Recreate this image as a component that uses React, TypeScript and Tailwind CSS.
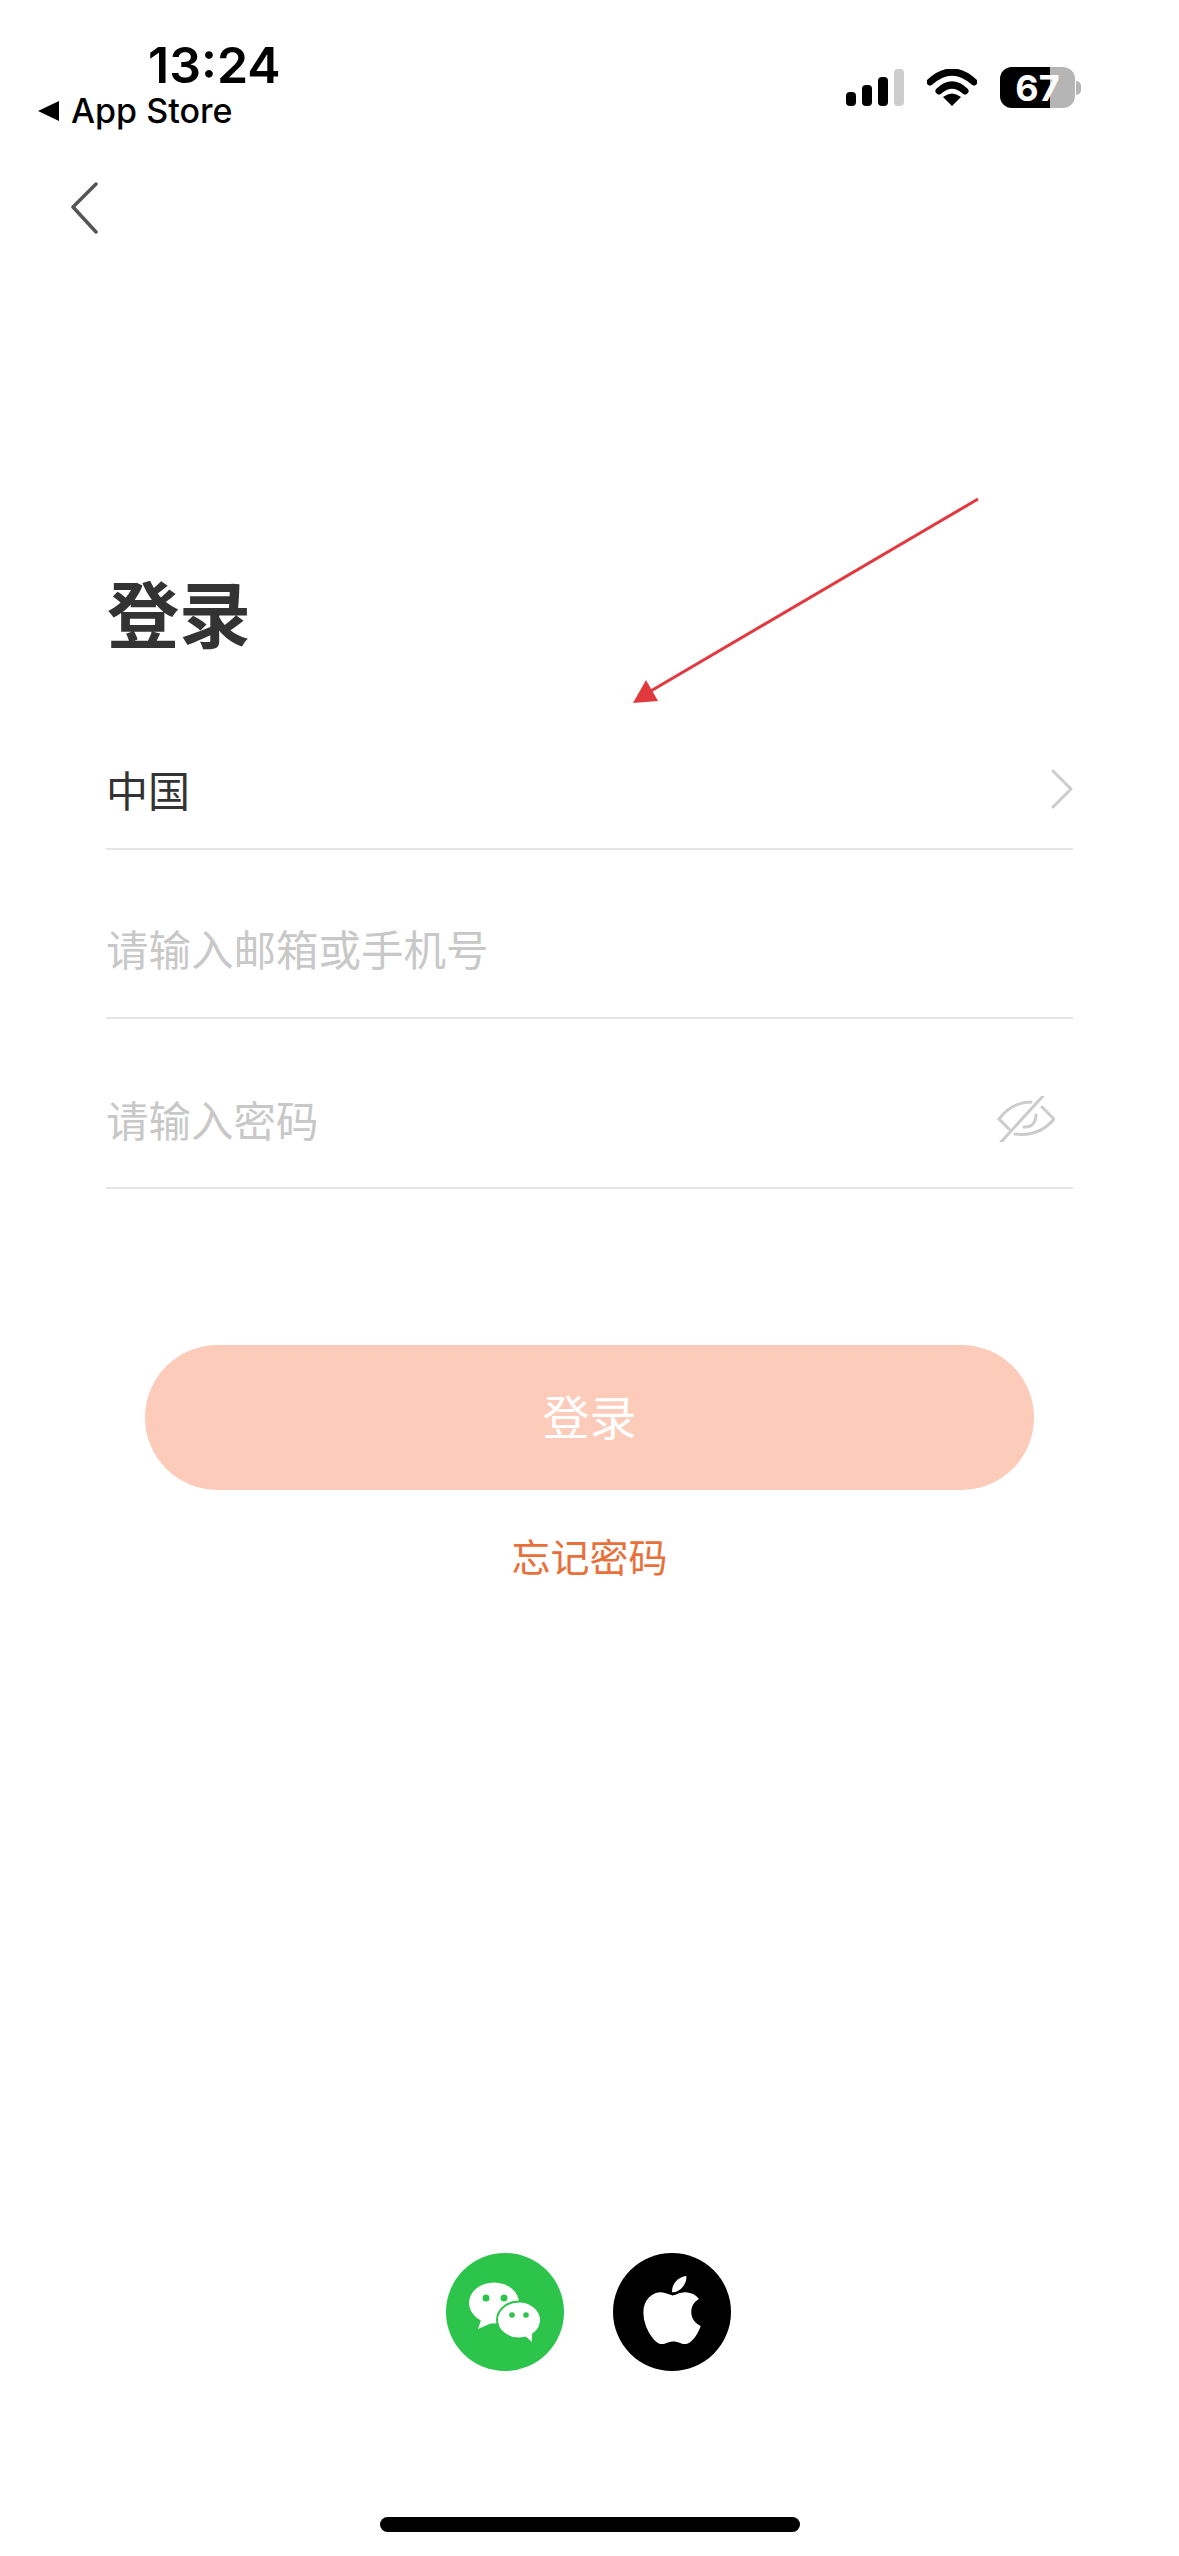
import { FaApple } from "react-icons/fa";

const cjk = "font-['Noto_Sans_CJK_SC',sans-serif]";

function StatusIcons() {
  return (
    <div className="flex items-center gap-[23px]">
      <svg width="58" height="37" viewBox="0 0 58 37">
        <rect x="0" y="23" width="10" height="14" rx="4" fill="#000" />
        <rect x="16" y="16" width="10" height="21" rx="4" fill="#000" />
        <rect x="32" y="8" width="10" height="29" rx="4" fill="#000" />
        <rect x="48" y="0" width="10" height="37" rx="4" fill="#cdcdcd" />
      </svg>
      <svg width="50" height="37" viewBox="0 0 50 37">
        <path d="M3 13 Q25 -7 47 13" fill="none" stroke="#000" strokeWidth="7" strokeLinecap="round" />
        <path d="M12 22 Q25 10 38 22" fill="none" stroke="#000" strokeWidth="7" strokeLinecap="round" />
        <path d="M25 37 L16 28 Q25 21 34 28 Z" fill="#000" />
      </svg>
      <div className="flex items-center gap-[1px]">
        <div className="relative flex h-[41px] w-[75px] overflow-hidden rounded-[12px] bg-[#b5b5b5]">
          <div className="h-full w-[50px] bg-black" />
          <span className="absolute inset-0 flex items-center justify-center font-['Inter',sans-serif] text-[36px] font-bold leading-none text-white">
            67
          </span>
        </div>
        <div className="h-[14px] w-[5px] rounded-r-full bg-[#b5b5b5]" />
      </div>
    </div>
  );
}

function WechatIcon() {
  return (
    <svg width="118" height="118" viewBox="0 0 118 118">
      <circle cx="59" cy="59" r="59" fill="#2cc44b" />
      <ellipse cx="48" cy="50" rx="25" ry="20.5" fill="#fff" />
      <path d="M36 64 L32 76 L48 69 Z" fill="#fff" />
      <circle cx="40" cy="45" r="3.5" fill="#2cc44b" />
      <circle cx="58" cy="45" r="3.5" fill="#2cc44b" />
      <ellipse cx="73" cy="67" rx="22" ry="18.5" fill="#fff" stroke="#2cc44b" strokeWidth="2" />
      <path d="M78 82 L86 89 L86 78 Z" fill="#fff" />
      <circle cx="66" cy="62" r="2.8" fill="#2cc44b" />
      <circle cx="80" cy="62" r="2.8" fill="#2cc44b" />
    </svg>
  );
}

function EyeOff() {
  return (
    <svg width="58" height="46" viewBox="0 0 58 46" fill="none" stroke="#cccccc" strokeWidth="3" strokeLinecap="round">
      <path d="M12 33 L2 23 Q15 6 34 6" />
      <path d="M45 11 L57 23 Q42 41 18 38" />
      <path d="M27 31 Q38 32 39 19" />
      <path d="M4 46 L46 0" />
    </svg>
  );
}

export default function App() {
  return (
    <div className={`relative flex h-[2556px] w-[1179px] flex-col overflow-hidden bg-white ${cjk}`}>
      {/* status bar */}
      <header className="flex h-[130px] items-start justify-between pl-[38px] pr-[98px] pt-[37px]">
        <div className="flex flex-col">
          <span className="ml-[110px] font-['Inter',sans-serif] text-[50px] font-semibold leading-[56px] text-black">
            13:24
          </span>
          <div className="-mt-[2px] flex items-center gap-[11px]">
            <svg width="22" height="22" viewBox="0 0 22 22">
              <path d="M0 11 L21 1 L21 21 Z" fill="#000" />
            </svg>
            <span className="font-['Inter',sans-serif] text-[34px] font-medium leading-[40px] text-black">App Store</span>
          </div>
        </div>
        <div className="pt-[30px]">
          <StatusIcons />
        </div>
      </header>

      <div className="pl-[70px] pt-[52px]">
        <svg width="28" height="52" viewBox="0 0 28 52" fill="none" stroke="#555" strokeWidth="3.5" strokeLinecap="round" strokeLinejoin="round">
          <path d="M26 2 L3 25 L26 50" />
        </svg>
      </div>

      {/* red annotation arrow */}
      <svg className="absolute left-[620px] top-[490px]" width="370" height="220" viewBox="0 0 370 220">
        <path d="M358 9 L24 205" stroke="#e2393f" strokeWidth="3" />
        <path d="M13 213 L26 190 L38 211 Z" fill="#e2393f" />
      </svg>

      <main className="flex flex-1 flex-col px-[106px] pt-[332px]">
        <h1 className="pl-[1px] text-[72px] font-semibold leading-[90px] text-[#333]">登录</h1>

        <div className="mt-[24px] flex h-[170px] items-center justify-between border-b-2 border-[#e4e4e4] pt-[50px]">
          <span className="text-[42px] leading-none text-[#333]">中国</span>
          <svg width="22" height="40" viewBox="0 0 22 40" fill="none" stroke="#cccccc" strokeWidth="3" strokeLinecap="round" strokeLinejoin="round">
            <path d="M2 2 L20 20 L2 38" />
          </svg>
        </div>

        <div className="flex h-[169px] items-center border-b-2 border-[#e4e4e4] pt-[30px]">
          <span className="text-[42.5px] leading-none text-[#c8c8c8]">请输入邮箱或手机号</span>
        </div>

        <div className="flex h-[170px] items-center justify-between border-b-2 border-[#e4e4e4] pr-[18px] pt-[32px]">
          <span className="text-[42.5px] leading-none text-[#c8c8c8]">请输入密码</span>
          <EyeOff />
        </div>

        <button className="mx-[39px] mt-[156px] flex h-[145px] items-center justify-center rounded-full bg-[#fdcbb9] pb-[6px] text-[47px] leading-none text-white">
          登录
        </button>

        <p className="mt-[42px] text-center text-[39px] leading-[46px] text-[#e8703a]">忘记密码</p>

        <div className="mt-auto flex justify-center gap-[49px] pb-[185px] pr-[2px]">
          <WechatIcon />
          <div className="flex h-[118px] w-[118px] items-center justify-center rounded-full bg-black pb-[4px]">
            <FaApple size={78} color="#fff" />
          </div>
        </div>
      </main>

      {/* home indicator */}
      <div className="absolute bottom-[24px] left-[380px] h-[15px] w-[420px] rounded-full bg-black" />
    </div>
  );
}
